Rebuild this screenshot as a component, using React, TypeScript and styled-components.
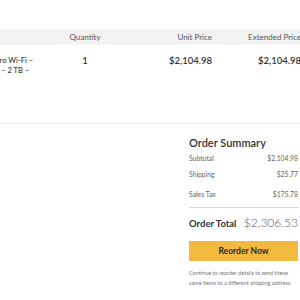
import React from 'react';
import styled, { createGlobalStyle } from 'styled-components';

const GlobalStyle = createGlobalStyle`
  html, body {
    margin: 0;
    padding: 0;
    background: #fff;
    overflow: hidden;
  }
  body {
    font-family: Lato, "Open Sans", "Liberation Sans", sans-serif;
    color: #333;
  }
`;

const Page = styled.div`
  width: 300px;
  height: 300px;
  overflow: hidden;
  padding-top: 29px;
  box-sizing: border-box;
`;

const Table = styled.div`
  width: 381px;
  margin-left: -80px;
  display: grid;
  grid-template-columns: 130px 70px 92px 89px;
`;

const HeadCell = styled.div<{ $align?: string }>`
  height: 16px;
  line-height: 16px;
  background: #f2f2f2;
  font-size: 8px;
  color: #555;
  text-align: ${(p) => p.$align || 'left'};
  white-space: nowrap;
`;

const Cell = styled.div<{ $align?: string }>`
  padding-top: 11px;
  min-height: 67px;
  border-bottom: 1px solid #eeeeee;
  font-size: 9.5px;
  line-height: 10px;
  font-weight: 600;
  color: #333;
  text-align: ${(p) => p.$align || 'left'};
  white-space: nowrap;
`;

const ProductName = styled.div`
  font-size: 7.5px;
  line-height: 10px;
  font-weight: 600;
  color: #444;
  padding-left: 3px;
`;

const Summary = styled.div`
  width: 109px;
  margin-left: 189px;
  padding-top: 11px;
`;

const Title = styled.h2`
  margin: 0;
  font-size: 11px;
  line-height: 16px;
  font-weight: 600;
  color: #333;
  white-space: nowrap;
`;

const Row = styled.div<{ $gap: number }>`
  display: flex;
  justify-content: space-between;
  margin-top: ${(p) => p.$gap}px;
  font-size: 6.8px;
  line-height: 10px;
  color: #666;
  white-space: nowrap;
`;

const Divider = styled.hr`
  border: none;
  border-top: 1px solid #d8d8d8;
  margin: 8px 0 0;
`;

const TotalRow = styled.div`
  display: flex;
  justify-content: space-between;
  align-items: baseline;
  margin-top: 6px;
  line-height: 18px;
  white-space: nowrap;
`;

const TotalLabel = styled.span`
  font-size: 9.5px;
  font-weight: 700;
  color: #333;
`;

const TotalValue = styled.span`
  font-size: 12px;
  font-weight: 300;
  color: #555;
`;

const Button = styled.button`
  display: block;
  width: 100%;
  height: 20px;
  margin-top: 8px;
  padding: 0;
  border: none;
  background: #f2b93f;
  font-family: inherit;
  font-size: 8.5px;
  font-weight: 700;
  color: #2a2a2a;
  cursor: pointer;
`;

const Note = styled.p`
  margin: 7px 0 0;
  font-size: 5.5px;
  line-height: 10px;
  color: #777;
  white-space: nowrap;
`;

const rows = [
  { label: 'Subtotal', value: '$2,104.98', gap: 2 },
  { label: 'Shipping', value: '$25.77', gap: 6 },
  { label: 'Sales Tax', value: '$175.78', gap: 10 },
];

const App = () => {
  return (
    <Page>
      <GlobalStyle />
      <Table>
        <HeadCell>&nbsp;&nbsp;Product</HeadCell>
        <HeadCell $align="center">Quantity</HeadCell>
        <HeadCell $align="right">Unit Price</HeadCell>
        <HeadCell $align="right">Extended Price</HeadCell>

        <Cell>
          <ProductName>
            AirPort Time Capsule Pro Wi-Fi –
            <br />
            AirPort Time Capsule 5 – 2 TB –
          </ProductName>
        </Cell>
        <Cell $align="center">1</Cell>
        <Cell $align="right">$2,104.98</Cell>
        <Cell $align="right">$2,104.98</Cell>
      </Table>

      <Summary>
        <Title>Order Summary</Title>
        {rows.map((r) => (
          <Row key={r.label} $gap={r.gap}>
            <span>{r.label}</span>
            <span>{r.value}</span>
          </Row>
        ))}
        <Divider />
        <TotalRow>
          <TotalLabel>Order Total</TotalLabel>
          <TotalValue>$2,306.53</TotalValue>
        </TotalRow>
        <Button>Reorder Now</Button>
        <Note>
          Continue to reorder details to send these
          <br />
          same items to a different shipping address.
        </Note>
      </Summary>
    </Page>
  );
};

export default App;
